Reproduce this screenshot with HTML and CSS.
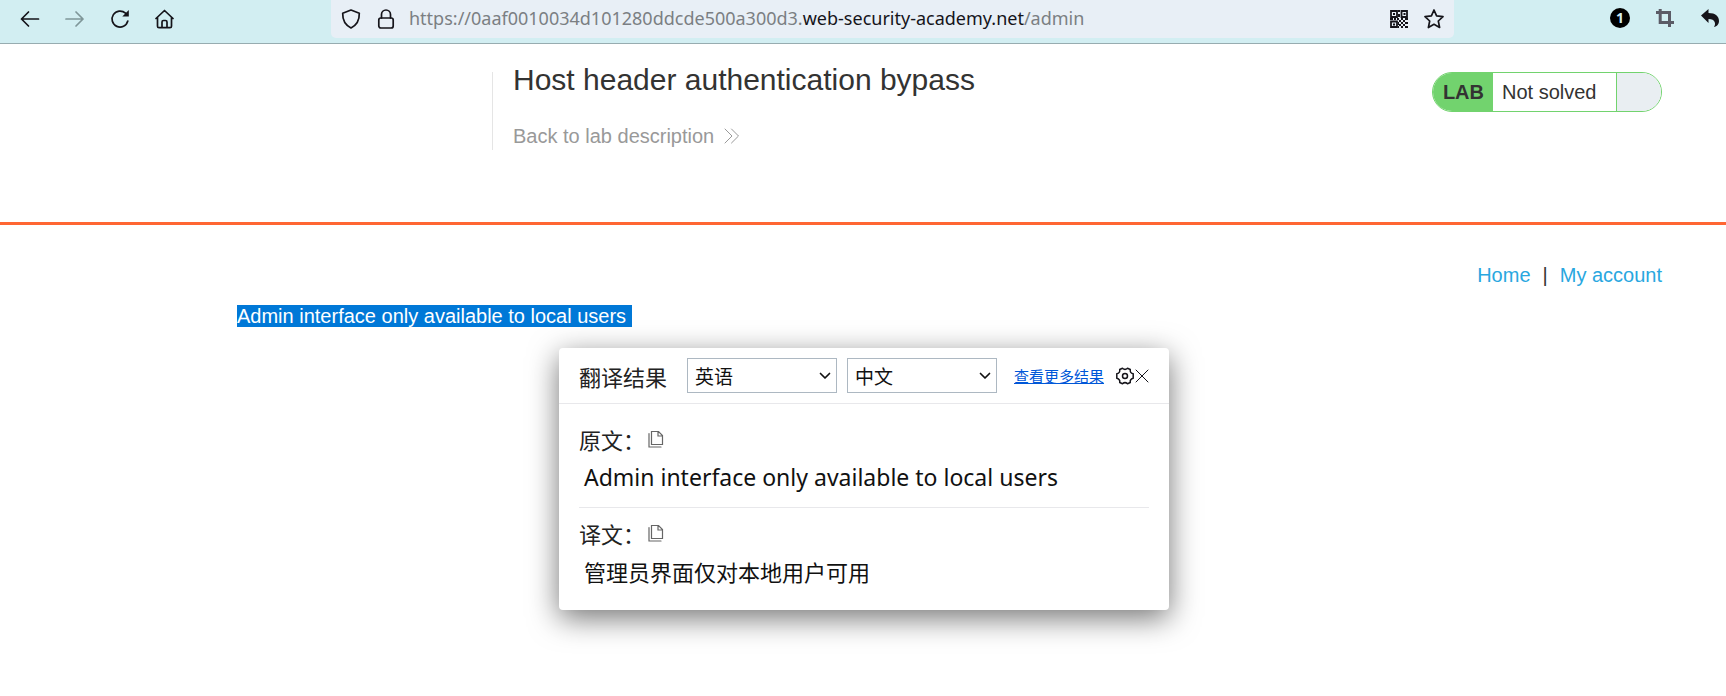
FILE: index.html
```html
<!DOCTYPE html>
<html lang="en">
<head>
<meta charset="utf-8">
<meta name="viewport" content="width=device-width, initial-scale=1">
<title>Host header authentication bypass</title>
<link rel="stylesheet" href="styles.css">
</head>
<body>
<div class="toolbar">
  <div class="nav">
    <button class="icon-btn" aria-label="Back"><svg width="20" height="20" viewBox="0 0 20 20"><path d="M18.500 10H1.500M8.500 3L1.500 10l7 7"/></svg></button>
    <button class="icon-btn icon-muted" aria-label="Forward" disabled><svg width="20" height="20" viewBox="0 0 20 20"><path d="M1 10h17M11 3l7 7-7 7"/></svg></button>
    <button class="icon-btn" aria-label="Reload"><svg width="20" height="20" viewBox="0 0 20 20"><path d="M17.800 12A8 8 0 1 1 15.500 4.200"/><path class="solid" d="M18.800 1v6.500h-6.500z"/></svg></button>
    <button class="icon-btn" aria-label="Home"><svg width="20" height="20" viewBox="0 0 20 20"><path d="M1 9.500L9.500 1.500l8.500 8M2.500 8.500v8.700q0 1.500 1.500 1.500h11q1.500 0 1.500-1.500V8.500M7 18.500v-5.500q0-1.500 1.500-1.500h2q1.500 0 1.500 1.500v5.500"/></svg></button>
  </div>
  <div class="address">
    <button class="icon-btn" aria-label="Tracking protection"><svg width="20" height="20" viewBox="0 0 20 20"><path d="M10 1L18.300 4.300C18.500 11 15 16.500 10 19C5 16.500 1.500 11 1.700 4.300z"/></svg></button>
    <button class="icon-btn" aria-label="Connection secure"><svg width="20" height="20" viewBox="0 0 20 20"><rect x="2.800" y="9" width="14.400" height="10" rx="2"/><path d="M5.500 9V5.500a4.500 4.500 0 0 1 9 0V9"/></svg></button>
    <div class="url">https://0aaf0010034d101280ddcde500a300d3.<span class="domain">web-security-academy.net</span>/admin</div>
    <button class="icon-btn" aria-label="QR code"><svg width="20" height="20" viewBox="0 0 20 20"><g class="qr"><path d="M2 2h6v6H2zM12.500 2H18v6h-5.500zM2 12.500h6V18H2z"/><path class="solid" d="M4 4h2v2H4zM14.500 4h2v2h-2zM4 14.500h2v2H4zM9 1h2v2H9zM9 5h2v3H9zM1 9h3v2H1zM5 9h2v2H5zM8 9h2v2H8zM12 9h2v2h-2zM16 9h3v2h-3zM10 11h2v2h-2zM14 11h2v2h-2zM9 13h1v3H9zM12 13h2v2h-2zM16 13h3v2h-3zM10 15h2v2h-2zM14 15h2v2h-2zM9 17h1v2H9zM12 17h2v2h-2zM16 17h3v2h-3z"/></g></svg></button>
    <button class="icon-btn" aria-label="Bookmark this page"><svg width="20" height="20" viewBox="0 0 20 20"><path d="M10 1l2.600 5.900 6.400.7-4.700 4.400 1.300 6.500L10 15.300 4.400 18.500l1.300-6.500L1 7.600l6.400-.7z"/></svg></button>
  </div>
  <div class="extensions">
    <button class="count" aria-label="1 notification">1</button>
    <button class="icon-btn icon-gray" aria-label="Crop"><svg width="20" height="20" viewBox="0 0 20 20"><path d="M1 4.500h13.500V19M5.200 1v13.500H19"/></svg></button>
    <button class="icon-btn" aria-label="Undo"><svg width="20" height="20" viewBox="0 0 20 20"><path class="solid" d="M1 7.500L8.500 1v4c7 0 10.500 3.500 10.500 8 0 3-2 5.500-5 6 2-3 1.500-8-5.500-8v4z"/></svg></button>
  </div>
</div>

<header class="lab-header">
  <div class="lab-title">
    <h1>Host header authentication bypass</h1>
    <a class="back" href="#">Back to lab description
      <svg width="16" height="16" viewBox="0 0 16 16"><path d="M1 1l7 7-7 7M7.500 1l7 7-7 7"/></svg>
    </a>
  </div>
  <div class="lab-status"><span class="lab-tag">LAB</span><span class="lab-text">Not solved</span><span class="lab-end"></span></div>
</header>

<main class="content">
  <nav class="links"><a href="#">Home</a><span>|</span><a href="#">My account</a></nav>
  <p class="message"><span class="selected">Admin interface only available to local users&nbsp;</span></p>
</main>

<section class="popup" lang="zh-CN" aria-label="翻译结果">
  <div class="popup-head">
    <h2>翻译结果</h2>
    <div class="select">
      <select aria-label="源语言"><option>英语</option></select>
      <svg width="12" height="8" viewBox="0 0 12 8"><path d="M1.500 1.500l4.500 4.500 4.500-4.500"/></svg>
    </div>
    <div class="select">
      <select aria-label="目标语言"><option>中文</option></select>
      <svg width="12" height="8" viewBox="0 0 12 8"><path d="M1.500 1.500l4.500 4.500 4.500-4.500"/></svg>
    </div>
    <a class="more" href="#">查看更多结果</a>
    <div class="popup-tools">
      <button class="icon-btn" aria-label="设置"><svg class="gear" width="20" height="18" viewBox="0 0 20 18"><path d="M7.500 1.200Q10 3.600 12.500 1.200L15.300 2.500Q14.600 5.800 18.200 6.800V11.200Q14.600 12.200 15.300 15.500L12.500 16.800Q10 14.400 7.500 16.800L4.700 15.500Q5.400 12.200 1.800 11.200V6.800Q5.400 5.800 4.700 2.500z"/><circle cx="10" cy="9" r="2.500"/></svg></button>
      <button class="icon-btn" aria-label="关闭"><svg class="close" width="14" height="14" viewBox="0 0 14 14"><path d="M1 1l12 12M13 1L1 13"/></svg></button>
    </div>
  </div>
  <div class="popup-body">
    <div class="entry">
      <div class="label">原文：<button class="icon-btn copy" aria-label="复制原文"><svg width="16" height="18" viewBox="0 0 16 18"><path d="M3.500 1.500h7l4 4v9h-11zM10 1.500V6h4.500M1 3.500v13.500h12"/></svg></button></div>
      <p class="source" lang="en">Admin interface only available to local users</p>
    </div>
    <div class="entry">
      <div class="label">译文：<button class="icon-btn copy" aria-label="复制译文"><svg width="16" height="18" viewBox="0 0 16 18"><path d="M3.500 1.500h7l4 4v9h-11zM10 1.500V6h4.500M1 3.500v13.500h12"/></svg></button></div>
      <p class="result">管理员界面仅对本地用户可用</p>
    </div>
  </div>
</section>
</body>
</html>
```
FILE: styles.css
```css
* { box-sizing: border-box; }
body {
  margin: 0;
  background: #fff;
  color: #333332;
  font: 20px/24px "Liberation Sans", Arial, sans-serif;
}
h1, h2, p { margin: 0; font-weight: 400; }
a { color: #29a7df; text-decoration: none; }
svg { display: block; flex: none; fill: none; stroke: currentColor; stroke-width: 1.7; stroke-linejoin: round; stroke-linecap: round; }
svg .solid { fill: currentColor; stroke: none; }
button { padding: 0; border: 0; background: none; color: inherit; font: inherit; }
.icon-btn { display: block; flex: none; color: #15141a; }

/* Browser toolbar */
.toolbar {
  display: flex;
  align-items: flex-start;
  justify-content: space-between;
  height: 44px;
  background: #d2eef2;
  border-bottom: 1px solid #97acb0;
}
.nav { display: flex; gap: 25px; padding: 9px 0 0 20px; width: 331px; flex: none; }
.icon-btn.icon-muted { color: #7f9699; }
.icon-btn.icon-gray { color: #5b5b66; }
.icon-gray svg { stroke-width: 3; stroke-linecap: butt; stroke-linejoin: miter; }
.address {
  flex: 1;
  display: flex;
  align-items: center;
  gap: 15px;
  height: 38px;
  padding: 0 10px;
  background: #e8eff6;
  border-radius: 0 0 5px 5px;
}
.url {
  flex: 1;
  margin-left: -2px;
  padding-bottom: 2px;
  font: 18px/24px "Noto Sans", sans-serif;
  color: #7b7f83;
  white-space: nowrap;
}
.domain { color: #15141a; }
.qr { stroke-width: 1.8; stroke-linejoin: miter; }
.extensions { display: flex; gap: 25px; width: 272px; padding: 8px 6px 0 0; justify-content: flex-end; flex: none; }
.count {
  width: 20px;
  height: 20px;
  border-radius: 50%;
  background: #000;
  color: #d2eef2;
  font: 700 14px/20px "Noto Sans", sans-serif;
}

/* Lab banner */
.lab-header {
  display: flex;
  justify-content: space-between;
  align-items: flex-start;
  padding: 28px 64px 72px 492px;
  border-bottom: 3px solid #ff6633;
}
.lab-title { height: 78px; padding-left: 20px; border-left: 1px solid #e5e5e5; }
h1 { margin-top: -10px; font-size: 30px; line-height: 36px; }
.back { display: flex; align-items: center; gap: 10px; margin-top: 26px; color: #999; }
.back svg { stroke-width: 1; }
.lab-status {
  display: flex;
  height: 40px;
  border: 1px solid #72d36e;
  border-radius: 20px;
  overflow: hidden;
  line-height: 38px;
}
.lab-tag { padding: 0 9px 0 10px; background: #72d36e; font-weight: 700; }
.lab-text { width: 124px; padding-left: 9px; border-right: 1px solid #72d36e; }
.lab-end { width: 44px; background: #e9eef2; }

/* Page content */
.content { padding: 38px 64px 0 237px; }
.links { display: flex; justify-content: flex-end; gap: 12px; }
.message { margin-top: 17px; }
.selected { background: #0078d7; color: #fff; }

/* Translation popup */
.popup {
  position: absolute;
  top: 348px;
  left: 559px;
  width: 610px;
  background: #fff;
  border-radius: 4px;
  box-shadow: 0 8px 30px rgba(0, 0, 0, .55);
  color: #222;
  font: 22px/30px "Noto Sans CJK SC", sans-serif;
}
.popup-head {
  display: flex;
  align-items: center;
  gap: 10px;
  height: 56px;
  padding: 0 20px;
  border-bottom: 1px solid #e8e8eb;
}
h2 { width: 98px; font-size: 22px; line-height: 30px; white-space: nowrap; }
.select { position: relative; width: 150px; }
.select select {
  display: block;
  width: 100%;
  height: 35px;
  padding: 0 7px;
  appearance: none;
  border: 1px solid #adb8c2;
  border-radius: 0;
  background: #fff;
  color: #111;
  font: 19px/28px "Noto Sans CJK SC", sans-serif;
}
.select svg { position: absolute; right: 6px; top: 14px; color: #111; pointer-events: none; }
.more { margin-left: 7px; color: #0057d8; font-size: 15px; text-decoration: underline; white-space: nowrap; }
.popup-tools { display: flex; align-items: center; margin-left: auto; }
.gear { stroke-width: 1.5; }
.close { stroke-width: 1; }
.popup-body { padding: 16px 20px 20px; }
.entry + .entry { margin-top: 11px; padding-top: 6px; border-top: 1px solid #e8e8eb; }
.label { display: flex; align-items: center; gap: 3px; line-height: 36px; height: 38px; }
.icon-btn.copy { color: #666; }
.copy svg { stroke-width: 1.2; stroke-linejoin: miter; }
.source, .result { padding-left: 5px; line-height: 38px; color: #111; }
.source { font-family: "Noto Sans", sans-serif; font-size: 23px; }
```
